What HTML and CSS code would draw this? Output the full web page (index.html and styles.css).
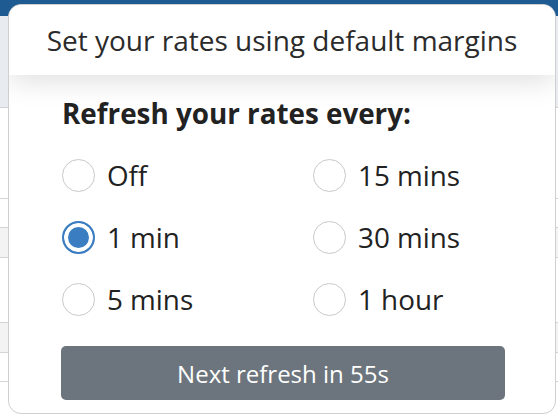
FILE: index.html
```html
<!DOCTYPE html>
<html lang="en">
<head>
    <meta charset="UTF-8">
    <meta name="viewport" content="width=device-width, initial-scale=1.0">
    <title>Refresh rates</title>
    <link rel="stylesheet" href="styles.css">
</head>
<body>
    <!-- Page behind the popup -->
    <div class="page">
        <div class="topbar"></div>
        <div class="panel"></div>
        <div class="row" style="height: 90px"></div>
        <div class="row" style="height: 28px"></div>
        <div class="row shaded" style="height: 29px"></div>
        <div class="row" style="height: 64px"></div>
        <div class="row shaded" style="height: 29px"></div>
        <div class="row" style="height: 28px"></div>
    </div>

    <!-- Refresh popup -->
    <div class="popup">
        <div class="popup-header">Set your rates using default margins</div>
        <div class="popup-body">
            <h3 class="section-title">Refresh your rates every:</h3>
            <div class="options">
                <label class="option"><input type="radio" name="rate"><span>Off</span></label>
                <label class="option"><input type="radio" name="rate"><span>15 mins</span></label>
                <label class="option"><input type="radio" name="rate" checked><span>1 min</span></label>
                <label class="option"><input type="radio" name="rate"><span>30 mins</span></label>
                <label class="option"><input type="radio" name="rate"><span>5 mins</span></label>
                <label class="option"><input type="radio" name="rate"><span>1 hour</span></label>
            </div>
            <button class="btn-refresh">Next refresh in 55s</button>
        </div>
    </div>
</body>
</html>
```

FILE: styles.css
```css
body {
    margin: 0;
    font-family: "Open Sans", "Noto Sans", sans-serif;
    background-color: #ffffff;
    overflow: hidden;
}

/* background page */
.page {
    width: 558px;
    height: 418px;
}
.topbar {
    height: 16px;
    background-color: #1d5b92;
}
.panel {
    height: 91px;
    background-color: #e8ecf1;
    border-bottom: 1px solid #d0d0d0;
}
.row {
    border-bottom: 1px solid #d4d4d4;
}
.row.shaded {
    background-color: #f3f3f3;
}

/* popup */
.popup {
    position: absolute;
    top: 4px;
    left: 8px;
    width: 546px;
    height: 408px;
    background-color: #ffffff;
    border: 1px solid #cfcfcf;
    border-radius: 13px;
    overflow: hidden;
}
.popup-header {
    position: relative;
    height: 70px;
    line-height: 70px;
    text-align: center;
    font-size: 28px;
    color: #2b2b2b;
    background-color: #ffffff;
    box-shadow: 0 6px 28px rgba(0, 0, 0, 0.13);
}
.popup-body {
    padding: 19px 50px 0 53px;
}
.section-title {
    margin: 0;
    font-size: 27.8px;
    font-weight: bold;
    line-height: 38px;
    color: #222222;
}
.options {
    display: grid;
    grid-template-columns: 251px 1fr;
    grid-auto-rows: 62px;
    margin-top: 12px;
}
.option {
    display: flex;
    align-items: center;
    gap: 12px;
    font-size: 27.8px;
    color: #222222;
    cursor: pointer;
}
.option input {
    appearance: none;
    -webkit-appearance: none;
    margin: 0;
    width: 33px;
    height: 33px;
    border: 1.5px solid #c9c9c9;
    border-radius: 50%;
    background-color: #ffffff;
    flex-shrink: 0;
}
.option input:checked {
    border: 2px solid #3a7dc0;
    box-shadow: inset 0 0 0 4px #ffffff;
    background-color: #3a7dc0;
}
.btn-refresh {
    display: block;
    width: 444px;
    height: 54px;
    margin-top: 16px;
    margin-left: -1px;
    border: none;
    border-radius: 5px;
    background-color: #6c757d;
    color: #ffffff;
    font-family: inherit;
    font-size: 24px;
    cursor: pointer;
}
```
